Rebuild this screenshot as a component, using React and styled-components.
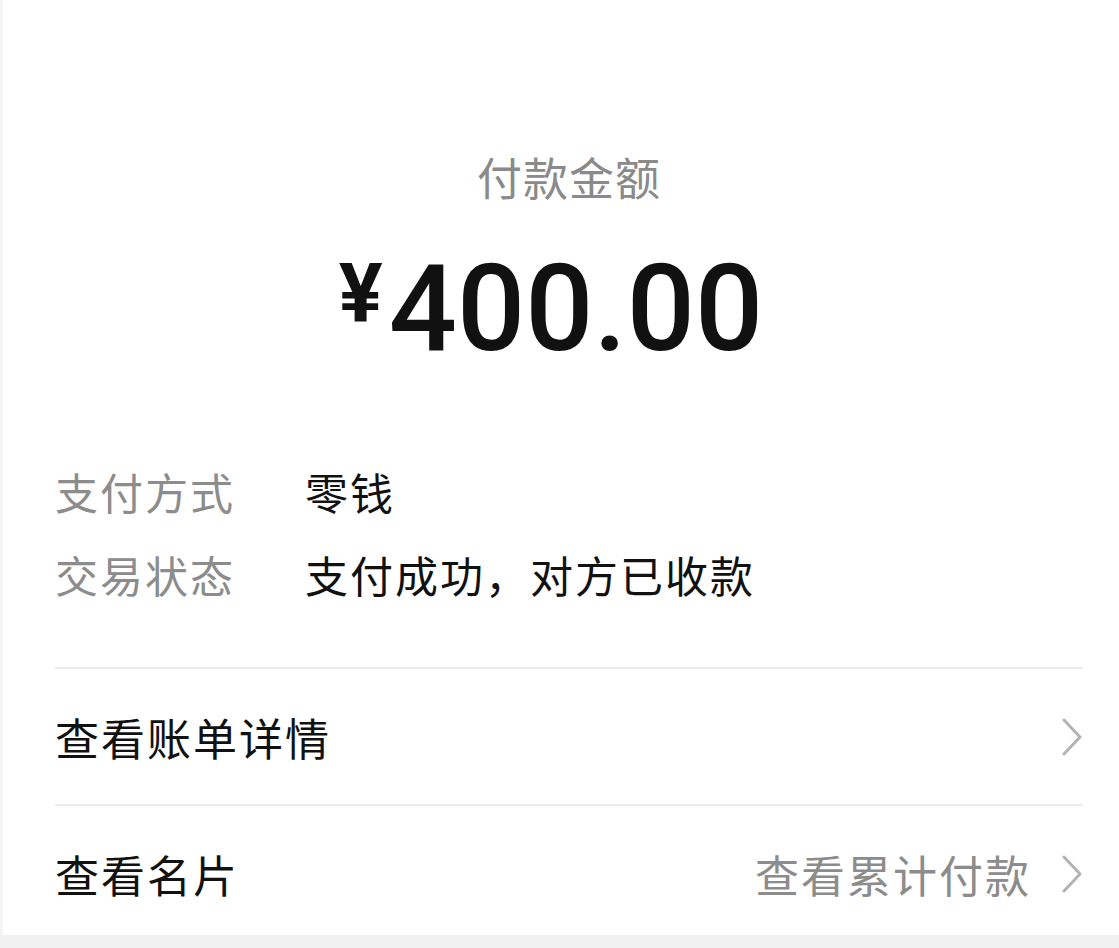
import React from 'react'
import styled, { createGlobalStyle } from 'styled-components'

const GlobalStyle = createGlobalStyle`
  html, body {
    margin: 0;
    padding: 0;
    background: #f1f1f1;
  }
  body {
    font-family: 'Noto Sans CJK SC', 'Noto Sans', sans-serif;
  }
`

const Chevron = () => (
  <ChevronSvg viewBox='0 0 22 38' width='22' height='38'>
    <polyline
      points='3,2 19,19 3,36'
      fill='none'
      stroke='#b3b3b3'
      strokeWidth='3'
      strokeLinecap='round'
      strokeLinejoin='round'
    />
  </ChevronSvg>
)

const infoRows = [
  { label: '支付方式', value: '零钱' },
  { label: '交易状态', value: '支付成功，对方已收款' },
]

const App = () => {
  return (
    <>
      <GlobalStyle />
      <Page>
        <Summary>
          <Caption>付款金额</Caption>
          <Amount>
            <Yen>¥</Yen>400.00
          </Amount>
        </Summary>
        <InfoList>
          {infoRows.map((row) => (
            <InfoRow key={row.label}>
              <InfoLabel>{row.label}</InfoLabel>
              <InfoValue>{row.value}</InfoValue>
            </InfoRow>
          ))}
        </InfoList>
        <Links>
          <LinkRow>
            <LinkTitle>查看账单详情</LinkTitle>
            <LinkSide>
              <Chevron />
            </LinkSide>
          </LinkRow>
          <LinkRow>
            <LinkTitle>查看名片</LinkTitle>
            <LinkSide>
              <LinkHint>查看累计付款</LinkHint>
              <Chevron />
            </LinkSide>
          </LinkRow>
        </Links>
      </Page>
    </>
  )
}

export default App

const Page = styled.main`
  height: 935px;
  box-sizing: border-box;
  background: #ffffff;
  border-left: 3px solid #f4f4f4;
  padding: 148px 36px 0 52px;
  display: flex;
  flex-direction: column;
`

const Summary = styled.section`
  display: flex;
  flex-direction: column;
  align-items: center;
`

const Caption = styled.div`
  font-size: 45px;
  line-height: 58px;
  letter-spacing: 1px;
  color: #8a8a8a;
`

const Amount = styled.div`
  margin-top: 22px;
  font-family: Roboto, 'Liberation Sans', sans-serif;
  font-weight: 500;
  font-size: 120px;
  line-height: 130px;
  color: #111111;
  padding-right: 36px;
`

const Yen = styled.span`
  font-size: 82px;
  font-weight: 700;
  vertical-align: 29px;
  margin-right: 6px;
`

const InfoList = styled.section`
  margin-top: 75px;
  display: flex;
  flex-direction: column;
`

const InfoRow = styled.div`
  display: grid;
  grid-template-columns: 250px 1fr;
  align-items: center;
  height: 83px;
  font-size: 43px;
  letter-spacing: 2px;
`

const InfoLabel = styled.span`
  color: #8c8c8c;
`

const InfoValue = styled.span`
  color: #111111;
`

const Links = styled.section`
  margin-top: 52px;
  display: flex;
  flex-direction: column;
`

const LinkRow = styled.div`
  display: flex;
  align-items: center;
  justify-content: space-between;
  height: 135px;
  border-top: 2px solid #ebebeb;
`

const LinkTitle = styled.span`
  font-size: 44px;
  letter-spacing: 2px;
  color: #111111;
`

const LinkSide = styled.div`
  display: flex;
  align-items: center;
  gap: 30px;
`

const LinkHint = styled.span`
  font-size: 44px;
  letter-spacing: 2px;
  color: #8c8c8c;
`

const ChevronSvg = styled.svg`
  display: block;
`
